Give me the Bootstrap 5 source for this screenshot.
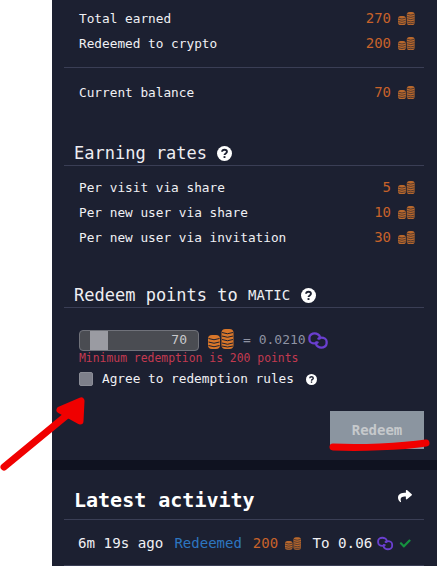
<!DOCTYPE html>
<html lang="en">
<head>
    <meta charset="UTF-8">
    <meta name="viewport" content="width=device-width, initial-scale=1.0">
    <title>Points</title>
    <link rel="stylesheet" href="https://cdn.jsdelivr.net/npm/bootstrap@5.3.0/dist/css/bootstrap.min.css">
    <style>
        html, body { height: 566px; overflow: hidden; background: #fff; }
        body { font-family: "DejaVu Sans Mono", "Liberation Mono", monospace; font-size: 12.75px; color: #f0f0f4; position: relative; }
        .shell { margin-left: 52px; background: #0f1220; }
        .panel { background: #1c2031; padding: 0 13px 0 12px; }
        .panel-top { padding-top: 6px; height: 460px; }
        .panel-bottom { margin-top: 10px; height: 96px; padding-top: 16px; }
        .stat-row { height: 25px; padding: 0 9px 0 15px; }
        .pts { color: #c8622a; font-size: 14px; }
        .coin-sm { width: 17px; height: 13px; margin-left: 7px; color: #b9682c; }
        .coin-lg { width: 26px; height: 20px; margin: 0 9px 2px; color: #d8762a; }
        .rule { border-top: 1px solid #3a3e55; }
        .rule-one { margin-top: 11px; margin-bottom: 12px; }
        .rule-two { margin-bottom: 9px; }
        .sect-title { font-size: 17px; line-height: 24px; padding-left: 10px; color: #eeeef2; }
        .sect-title small { font-size: 14px; }
        .earn-head { margin-top: 36px; }
        .redeem-head { margin-top: 33px; }
        .help-lg { width: 15px; height: 15px; margin-left: 10px; }
        .redeem-head .help-lg { margin-left: 11px; }
        .help-sm { width: 11px; height: 11px; margin-left: 12px; }
        .swap-row { margin-top: 21px; padding-left: 15px; }
        .slider-box { width: 120px; height: 21px; background: #4a4c52; border: 1px solid #70727a; border-radius: 4px; padding: 0 11px 0 10px; font-size: 13px; color: #c9c9cc; }
        .slider-thumb { width: 18px; height: 19px; background: #9a9ba2; }
        .rate { font-size: 13px; color: #8f93a3; }
        .matic { width: 20px; height: 17px; margin-left: 2px; color: #6a3fd0; }
        .warn-line { font-size: 11.4px; line-height: 14px; color: #c43a50; padding-left: 15px; }
        .agree-row { padding-left: 15px; margin-top: 6px; height: 16px; }
        .agree-row .form-check-input { width: 14px; height: 14px; margin: 0 9px 0 0; background-color: #7d7f8a; border: 1px solid #8b8d97; border-radius: 2px; opacity: 1; }
        .redeem-wrap { margin-top: 24px; }
        .btn-redeem { width: 94px; height: 38px; border: 0; border-radius: 0; background: #8b95a0; color: #c6c9cc; font-family: inherit; font-weight: 700; font-size: 14px; opacity: 1; padding: 0; }
        .btn-redeem:disabled { background: #8b95a0; color: #c6c9cc; opacity: 1; }
        .feed-title { font-size: 20px; font-weight: 700; line-height: 28px; padding-left: 10px; color: #fff; }
        .share-ico { width: 16px; height: 14px; margin: 0 11px 8px 0; color: #fff; }
        .feed-rule { margin-top: 5px; }
        .feed-row { height: 46px; font-size: 14.2px; padding: 2px 13px 0 14px; border-bottom: 1px solid #3a3e55; white-space: nowrap; }
        .tx-kind { color: #2d76c0; font-size: 14px; margin: 0 11px; }
        .tx-to { margin-left: 11px; }
        .feed-row .matic { width: 17px; height: 15px; margin-left: 5px; }
        .ok-ico { width: 13px; height: 11px; margin-left: 5px; color: #16923f; }
        .markup { position: absolute; left: 0; top: 0; width: 437px; height: 566px; pointer-events: none; }
    </style>
</head>
<body>
    <svg width="0" height="0" class="position-absolute">
        <symbol id="coins" viewBox="0 0 26 20">
            <rect x="0" y="6" width="12" height="14" rx="4" fill="currentColor"/>
            <rect x="13.5" y="0" width="12" height="20" rx="4" fill="currentColor"/>
            <g fill="none" stroke="#1c2031" stroke-width="1">
                <path d="M.5 9.5q5.5 2.5 11 0M.5 13q5.5 2.5 11 0M.5 16.5q5.5 2.5 11 0"/>
                <path d="M14 3.5q5.5 2.5 11 0M14 7q5.5 2.5 11 0M14 10.5q5.5 2.5 11 0M14 14q5.5 2.5 11 0M14 17q5.5 2 11 0"/>
            </g>
        </symbol>
        <symbol id="poly" viewBox="0 0 20 17">
            <g fill="none" stroke="currentColor" stroke-width="2.3" stroke-linecap="round" stroke-linejoin="round">
                <path d="M11.8 6.6V4.8C11.8 3 9 1.4 6.6 1.4S1.4 3 1.4 5.4v2c0 2.4 2.6 4 5.2 4 1.2 0 2.2-.4 3-1"/>
                <path d="M8.2 10.4v1.8c0 1.8 2.8 3.4 5.2 3.4s5.2-1.6 5.2-4v-2c0-2.4-2.6-4-5.2-4-1.2 0-2.2.4-3 1"/>
            </g>
        </symbol>
        <symbol id="help" viewBox="0 0 16 16">
            <circle cx="8" cy="8" r="8" fill="#fff"/>
            <path d="M5.4 6.2C5.5 4.7 6.6 4 8 4c1.5 0 2.6.8 2.6 2.1 0 1.8-2.6 1.8-2.6 3.6" fill="none" stroke="#1c2031" stroke-width="2"/>
            <rect x="7" y="10.8" width="2" height="2" fill="#1c2031"/>
        </symbol>
    </svg>

    <div class="shell">
        <div class="panel panel-top">
            <div class="stat-row d-flex align-items-center justify-content-between"><span>Total earned</span><span class="pts d-flex align-items-center">270<svg class="coin-sm"><use href="#coins"/></svg></span></div>
            <div class="stat-row d-flex align-items-center justify-content-between"><span>Redeemed to crypto</span><span class="pts d-flex align-items-center">200<svg class="coin-sm"><use href="#coins"/></svg></span></div>
            <div class="rule rule-one"></div>
            <div class="stat-row d-flex align-items-center justify-content-between"><span>Current balance</span><span class="pts d-flex align-items-center">70<svg class="coin-sm"><use href="#coins"/></svg></span></div>

            <div class="sect-title d-flex align-items-center earn-head">Earning rates<svg class="help-lg"><use href="#help"/></svg></div>
            <div class="rule rule-two"></div>
            <div class="stat-row d-flex align-items-center justify-content-between"><span>Per visit via share</span><span class="pts d-flex align-items-center">5<svg class="coin-sm"><use href="#coins"/></svg></span></div>
            <div class="stat-row d-flex align-items-center justify-content-between"><span>Per new user via share</span><span class="pts d-flex align-items-center">10<svg class="coin-sm"><use href="#coins"/></svg></span></div>
            <div class="stat-row d-flex align-items-center justify-content-between"><span>Per new user via invitation</span><span class="pts d-flex align-items-center">30<svg class="coin-sm"><use href="#coins"/></svg></span></div>

            <div class="sect-title d-flex align-items-center redeem-head">Redeem points to&nbsp;<small>MATIC</small><svg class="help-lg"><use href="#help"/></svg></div>
            <div class="rule"></div>

            <div class="d-flex align-items-center swap-row">
                <div class="slider-box d-flex align-items-center justify-content-between"><div class="slider-thumb"></div><span>70</span></div>
                <svg class="coin-lg"><use href="#coins"/></svg>
                <span class="rate">= 0.0210</span>
                <svg class="matic"><use href="#poly"/></svg>
            </div>
            <div class="warn-line">Minimum redemption is 200 points</div>
            <div class="agree-row d-flex align-items-center">
                <input class="form-check-input" type="checkbox" disabled>
                <span>Agree to redemption rules</span>
                <svg class="help-sm"><use href="#help"/></svg>
            </div>
            <div class="d-flex justify-content-end redeem-wrap">
                <button class="btn btn-redeem" disabled>Redeem</button>
            </div>
        </div>
        <div class="panel panel-bottom">
            <div class="d-flex align-items-center justify-content-between">
                <div class="feed-title">Latest activity</div>
                <svg class="share-ico" viewBox="0 0 512 512" fill="currentColor"><path d="M503.691 189.836L327.687 37.851C312.281 24.546 288 35.347 288 56.015v80.053C127.371 137.907 0 170.1 0 322.326c0 61.441 39.581 122.309 83.333 154.132 13.654 9.931 33.114-2.533 28.079-18.631C66.066 312.814 132.917 274.316 288 272.085V360c0 20.7 24.3 31.453 39.687 18.164l176.004-152c11.071-9.562 11.086-26.753 0-36.328z"/></svg>
            </div>
            <div class="rule feed-rule"></div>
            <div class="feed-row d-flex align-items-center">
                <span>6m 19s ago</span><span class="tx-kind">Redeemed</span><span class="pts">200</span><svg class="coin-sm"><use href="#coins"/></svg>
                <span class="tx-to">To 0.06</span><svg class="matic"><use href="#poly"/></svg>
                <svg class="ok-ico" viewBox="0 0 512 512" fill="currentColor"><path d="M173.898 439.404l-166.4-166.4c-9.997-9.997-9.997-26.206 0-36.204l36.203-36.204c9.997-9.998 26.207-9.998 36.204 0L192 312.69 432.095 72.596c9.997-9.997 26.207-9.997 36.204 0l36.203 36.204c9.997 9.997 9.997 26.206 0 36.204l-294.4 294.401c-9.998 9.997-26.207 9.997-36.204-.001z"/></svg>
            </div>
        </div>
    </div>

    <!-- hand drawn annotations on top of the screenshot -->
    <svg class="markup" viewBox="0 0 437 566">
        <g fill="none" stroke="#f00000" stroke-linecap="round" stroke-linejoin="round">
            <path d="M4 467 L78 406" stroke-width="7"/>
            <path d="M60 410 L81 401 L80 421 Z" stroke-width="7" fill="#f00000"/>
            <path d="M333 447 C360 448 400 447 426 443" stroke-width="7"/>
        </g>
    </svg>
</body>
</html>
